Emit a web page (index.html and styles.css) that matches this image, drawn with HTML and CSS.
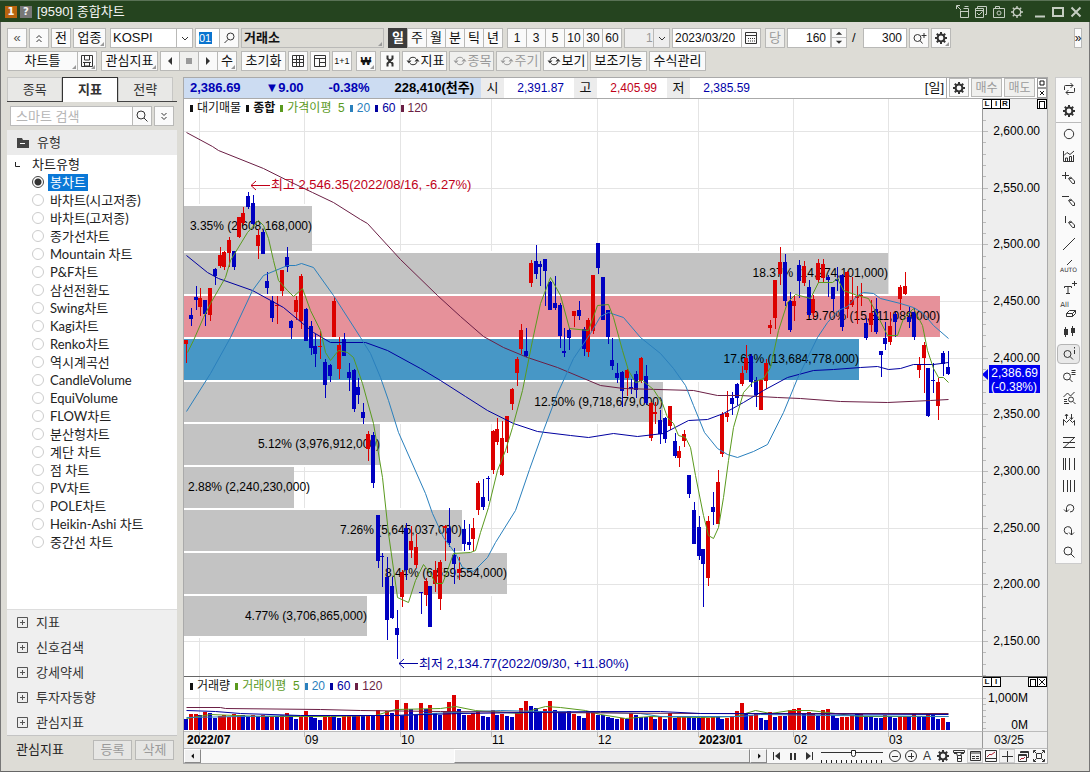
FILE: index.html
```html
<!DOCTYPE html>
<html lang="ko">
<head>
<meta charset="utf-8">
<title>[9590] 종합차트</title>
<link rel="stylesheet" href="styles.css">
</head>
<body>
<svg class="defs" aria-hidden="true">
  <symbol id="i-gear" viewBox="0 0 16 16"><circle cx="8" cy="8" r="3.400" fill="none" stroke="currentColor" stroke-width="2"/><path d="M8 2v3M8 11v3M2 8h3M11 8h3M3.800 3.800l2 2M10.200 10.200l2 2M12.200 3.800l-2 2M5.800 10.200l-2 2" stroke="currentColor" stroke-width="2"/></symbol>
  <symbol id="i-gearthin" viewBox="0 0 16 16"><circle cx="8" cy="8" r="3.700" fill="none" stroke="currentColor" stroke-width="1.400"/><path d="M8 2v3M8 11v3M2 8h3M11 8h3M3.800 3.800l2 2M10.200 10.200l2 2M12.200 3.800l-2 2M5.800 10.200l-2 2" stroke="currentColor" stroke-width="1.400"/></symbol>
  <symbol id="i-search" viewBox="0 0 16 16"><circle cx="7" cy="7" r="4"/><path d="M10 10l3.500 3.500"/></symbol>
  <symbol id="i-searchl" viewBox="0 0 16 16"><circle cx="9.500" cy="6.500" r="3.500"/><path d="M7 9.500L3.500 13"/></symbol>
  <symbol id="i-cycle" viewBox="0 0 16 16"><path d="M4 7a4 3.500 0 0 1 7-1.500M12 9a4 3.500 0 0 1-7 1.500"/><path d="M1.500 7.500h5L4 10.500zM9.500 8.500h5L12 5.500z" fill="currentColor" stroke="none"/></symbol>
</svg>
<div class="window">
  <header class="title">
    <span class="badge one">1</span><span class="badge help">?</span>
    <h1>[9590] 종합차트</h1>
    <div class="wintools">
      <button aria-label="내보내기"><svg viewBox="0 0 16 16"><path d="M1.500 5V1.500H5M2 2l4 4M5.500 6.500V13.500h8V4.500h-5M6 7.500h7M9.500 2.500h4"/></svg></button>
      <button aria-label="복사"><svg viewBox="0 0 16 16"><path d="M4.500 4V2.500h9v8H12M2.500 4.500h8v9h-8zM3 6.500h7M4 9l2 2 3.500-3.500"/></svg></button>
      <button aria-label="캡처"><svg viewBox="0 0 16 16"><path d="M2.500 4.500h11v9h-11zM4.500 4V2.500h4V4"/><circle cx="8" cy="9" r="2"/></svg></button>
      <button aria-label="설정"><svg><use href="#i-gearthin"/></svg></button>
      <button aria-label="최소화" class="gapl"><svg viewBox="0 0 16 16"><path d="M3 12.500h10" stroke-width="2"/></svg></button>
      <button aria-label="최대화"><svg viewBox="0 0 16 16"><path d="M3 4h10v8H3z" stroke-width="2"/></svg></button>
      <button aria-label="닫기"><svg viewBox="0 0 16 16"><path d="M3.500 3.500l9 9M12.500 3.500l-9 9" stroke-width="2"/></svg></button>
    </div>
  </header>

  <div class="bar">
    <button class="b w20 small">«</button>
    <button class="b w20 small" aria-label="위로"><svg viewBox="0 0 16 16"><path d="M5.500 8L8 5.500 10.500 8M5.500 12L8 9.500l2.500 2.500"/></svg></button>
    <button class="b w20">전</button>
    <button class="b w33 more">업종</button>
    <span class="grp ml1"><select class="sel kospi" aria-label="업종 선택"><option>KOSPI</option></select><svg class="arrow" viewBox="0 0 16 16"><path d="M5 7l3 3 3-3"/></svg></span>
    <span class="grp"><input class="code" value="01" aria-label="코드"><button class="b w20" aria-label="검색"><svg><use href="#i-searchl"/></svg></button></span>
    <output class="market more">거래소</output>
    <span class="grp ml1 joined"><button class="b on">일</button><button class="b">주</button><button class="b">월</button><button class="b">분</button><button class="b">틱</button><button class="b">년</button></span>
    <span class="grp ml1 joined num"><button class="b">1</button><button class="b">3</button><button class="b">5</button><button class="b">10</button><button class="b">30</button><button class="b">60</button></span>
    <span class="grp"><select class="sel unit" aria-label="단위" disabled><option>1</option></select><svg class="arrow" viewBox="0 0 16 16"><path d="M5 7l3 3 3-3"/></svg></span>
    <span class="grp"><input class="date" value="2023/03/20" aria-label="날짜"><button class="b w20" aria-label="달력"><svg viewBox="0 0 16 16"><path d="M2.500 2.500h11v11h-11zM3 5.500h10"/><path d="M5 8.500h7M5 11h7" stroke-dasharray="1 1"/></svg></button></span>
    <button class="b w20 off ml1">당</button>
    <span class="grp"><input class="n45" value="160" aria-label="표시 개수"><button class="b w16 spin" aria-label="개수 조절"><svg viewBox="0 0 16 20"><path d="M0 9.500h16" stroke="#b5b5b5"/><path d="M4.500 6.500h7L8 3zM4.500 13h7L8 16.500z" fill="currentColor" stroke="none"/></svg></button></span>
    <span class="slash">/</span>
    <input class="n45" value="300" aria-label="전체 개수">
    <button class="b w20" aria-label="확대"><svg viewBox="0 0 16 16"><circle cx="6.500" cy="8" r="3.500"/><path d="M9 10.500l2.500 3M10.500 5.500h5M13 3v5"/></svg></button>
    <button class="b w20 more" aria-label="설정"><svg><use href="#i-gear"/></svg></button>
    <button class="b expand">»</button>
  </div>

  <div class="bar second">
    <span class="grp joined"><button class="b w72 more">차트틀</button><button class="b more" aria-label="저장"><svg viewBox="0 0 16 16"><path d="M2.500 2.500h11v11h-11zM5.500 3v4h5V3M4 9.500h8M5.500 10v3h5v-3"/></svg></button></span>
    <button class="b w57 more ml1">관심지표</button>
    <span class="grp joined"><button class="b" aria-label="이전"><svg viewBox="0 0 16 16"><path d="M10 4v8L6 8z" fill="currentColor" stroke="none"/></svg></button><button class="b off" aria-label="정지"><svg viewBox="0 0 16 16"><path d="M5 5h6v6H5z" fill="currentColor" stroke="none"/></svg></button><button class="b" aria-label="다음"><svg viewBox="0 0 16 16"><path d="M6 4v8l4-4z" fill="currentColor" stroke="none"/></svg></button><button class="b more">수</button></span>
    <button class="b w46 ml1">초기화</button>
    <button class="b w20" aria-label="격자"><svg viewBox="0 0 16 16"><path d="M2.500 2.500h11v11h-11zM2.500 6.500h11M2.500 9.500h11M6.500 2.500v11M9.500 2.500v11"/></svg></button>
    <button class="b w20" aria-label="분할"><svg viewBox="0 0 16 16"><path d="M2.500 2.500h11v11h-11zM2.500 5.500h11M7.500 5.500v8M7.500 9.500h6"/></svg></button>
    <button class="b w20 tiny">1+1</button>
    <button class="b w20 more ml1 wonb">₩</button>
    <button class="b w20 ml1" aria-label="도구"><svg viewBox="0 0 16 16"><path d="M5.500 2.500v3l5 5v3M10.500 2.500v3l-5 5v3" stroke-width="2"/></svg></button>
    <button class="b w46"><svg><use href="#i-cycle"/></svg>지표</button>
    <button class="b w46 off"><svg><use href="#i-cycle"/></svg>종목</button>
    <button class="b w46 off"><svg><use href="#i-cycle"/></svg>주기</button>
    <button class="b w46"><svg><use href="#i-cycle"/></svg>보기</button>
    <button class="b w57">보조기능</button>
    <button class="b w57">수식관리</button>
  </div>

  <main class="work">
    <aside class="side">
      <nav class="tabs"><button>종목</button><button class="cur">지표</button><button>전략</button></nav>
      <div class="find"><input placeholder="스마트 검색" aria-label="스마트 검색"><button class="b" aria-label="검색"><svg><use href="#i-search"/></svg></button><button class="b fold" aria-label="펼치기"><svg viewBox="0 0 16 16"><path d="M5.500 5L8 7.500 10.500 5M5.500 9L8 11.500 10.500 9"/></svg></button></div>
      <h2 class="sec"><svg viewBox="0 0 12 12"><path d="M0 1h5l1 2h6v8H0z" fill="#444" stroke="none"/><path d="M3 6.500h5" stroke="#fff"/></svg>유형</h2>
      <fieldset class="tree">
        <legend><svg viewBox="0 0 8 8"><path d="M1.500 1v4.500H6"/></svg>차트유형</legend>
        <label><input type="radio" name="t" checked><span>봉차트</span></label>
        <label><input type="radio" name="t"><span>바차트(시고저종)</span></label>
        <label><input type="radio" name="t"><span>바차트(고저종)</span></label>
        <label><input type="radio" name="t"><span>종가선차트</span></label>
        <label><input type="radio" name="t"><span>Mountain 차트</span></label>
        <label><input type="radio" name="t"><span>P&amp;F차트</span></label>
        <label><input type="radio" name="t"><span>삼선전환도</span></label>
        <label><input type="radio" name="t"><span>Swing차트</span></label>
        <label><input type="radio" name="t"><span>Kagi차트</span></label>
        <label><input type="radio" name="t"><span>Renko차트</span></label>
        <label><input type="radio" name="t"><span>역시계곡선</span></label>
        <label><input type="radio" name="t"><span>CandleVolume</span></label>
        <label><input type="radio" name="t"><span>EquiVolume</span></label>
        <label><input type="radio" name="t"><span>FLOW차트</span></label>
        <label><input type="radio" name="t"><span>분산형차트</span></label>
        <label><input type="radio" name="t"><span>계단 차트</span></label>
        <label><input type="radio" name="t"><span>점 차트</span></label>
        <label><input type="radio" name="t"><span>PV차트</span></label>
        <label><input type="radio" name="t"><span>POLE차트</span></label>
        <label><input type="radio" name="t"><span>Heikin-Ashi 차트</span></label>
        <label><input type="radio" name="t"><span>중간선 차트</span></label>
      </fieldset>
      <div class="groups">
        <button><svg viewBox="0 0 12 12"><path d="M.5 .5h10v10H.5zM3 5.500h5M5.500 3v5"/></svg>지표</button>
        <button><svg viewBox="0 0 12 12"><path d="M.5 .5h10v10H.5zM3 5.500h5M5.500 3v5"/></svg>신호검색</button>
        <button><svg viewBox="0 0 12 12"><path d="M.5 .5h10v10H.5zM3 5.500h5M5.500 3v5"/></svg>강세약세</button>
        <button><svg viewBox="0 0 12 12"><path d="M.5 .5h10v10H.5zM3 5.500h5M5.500 3v5"/></svg>투자자동향</button>
        <button><svg viewBox="0 0 12 12"><path d="M.5 .5h10v10H.5zM3 5.500h5M5.500 3v5"/></svg>관심지표</button>
      </div>
      <div class="foot"><span>관심지표</span><button class="b off">등록</button><button class="b off">삭제</button></div>
    </aside>

    <section class="chart">
      <div class="quote">
        <div class="now"><b>2,386.69</b><b>▼9.00</b><b>-0.38%</b><b class="k">228,410(천주)</b></div>
        <span class="lab">시</span><span class="val down">2,391.87</span>
        <span class="lab">고</span><span class="val up">2,405.99</span>
        <span class="lab">저</span><span class="val down">2,385.59</span>
        <span class="period">[일]</span>
        <button class="b w20" aria-label="설정"><svg><use href="#i-gear"/></svg></button>
        <button class="b w31 off">매수</button><button class="b w31 off">매도</button>
        <span class="pair"><button aria-label="최대화"><svg viewBox="0 0 10 10"><path d="M3 3h4v4H3z"/></svg></button><button aria-label="닫기"><svg viewBox="0 0 10 10"><path d="M3 3l4 4M7 3L3 7"/></svg></button></span>
      </div>
      <div class="pane plot">
        <div class="legend"><span>대기매물</span><span class="bold">종합</span><span class="c5">가격이평&nbsp; 5</span><span class="c20">20</span><span class="c60">60</span><span class="c120">120</span></div>
        <svg id="price" role="img" aria-label="KOSPI 일봉"></svg>
      </div>
      <div class="pane axis">
        <div class="mini"><i>L</i><i>I</i><i>R</i></div><div class="mini right"><i class="sq"></i></div>
        <svg id="axis"></svg>
      </div>
      <div class="pane vol">
        <div class="legend"><span>거래량</span><span class="c5">거래이평&nbsp; 5</span><span class="c20">20</span><span class="c60">60</span><span class="c120">120</span></div>
        <svg id="volume" role="img" aria-label="거래량"></svg>
      </div>
      <div class="pane vaxis">
        <div class="mini"><i>L</i><i>I</i></div><div class="mini right"><i class="sq"></i><i class="x"><svg viewBox="0 0 8 8"><path d="M1 1l6 6M7 1L1 7"/></svg></i></div>
        <svg id="vaxis"></svg>
      </div>
      <div class="pane dates"><svg id="dates"></svg></div>
      <div class="pane lastdate">03/25</div>
      <div class="bottom">
        <button class="sb" aria-label="왼쪽"><svg viewBox="0 0 16 16"><path d="M9 5v6L6 8z" fill="#000" stroke="none"/></svg></button>
        <div class="track"><div class="thumb"></div></div>
        <button class="sb" aria-label="오른쪽"><svg viewBox="0 0 16 16"><path d="M7 5v6l3-3z" fill="#000" stroke="none"/></svg></button>
        <div class="play">
          <button aria-label="처음"><svg viewBox="0 0 16 16"><path d="M4.500 4v8" /><path d="M11 4v8L6 8z" fill="currentColor" stroke="none"/></svg></button>
          <button aria-label="일시정지"><svg viewBox="0 0 16 16"><path d="M6 5v7M10 5v7" stroke-width="2"/></svg></button>
          <button aria-label="끝"><svg viewBox="0 0 16 16"><path d="M11.500 4v8"/><path d="M5 4v8l5-4z" fill="currentColor" stroke="none"/></svg></button>
        </div>
        <div class="slide"><input type="range" min="0" max="100" value="53" aria-label="확대 비율"></div>
        <div class="acts">
          <button aria-label="축소"><svg viewBox="0 0 16 16"><circle cx="8" cy="8" r="5.500"/><path d="M5 8.500h6"/></svg></button>
          <button aria-label="확대"><svg viewBox="0 0 16 16"><circle cx="8" cy="8" r="5.500"/><path d="M5 8.500h6M8.500 5v6"/></svg></button>
          <button>A</button>
          <button aria-label="설정"><svg><use href="#i-gear"/></svg></button>
          <button aria-label="도구"><svg viewBox="0 0 16 16"><path d="M2.500 2.500h11v2h-11zM3 5.500h3v2M13 5.500h-3v2M6.500 7.500h4v6h-4zM7 10.500h3"/></svg></button>
          <button aria-label="표" class="box"><svg viewBox="0 0 16 16"><path d="M3.500 3.500h10v9h-10zM3.500 5h10M5 8.500h3M5 10.500h3M9 8.500h3M9 10.500h3"/></svg></button>
          <button aria-label="차트"><svg viewBox="0 0 16 16"><path d="M2.500 2.500h11v11h-11zM3 10.500h10"/><path d="M4 9l3-3 1 1 4-3" stroke="#b02030"/></svg></button>
          <button aria-label="십자선" class="box"><svg viewBox="0 0 16 16"><path d="M3 8.500h11M8.500 3v11"/></svg></button>
          <button aria-label="창"><svg viewBox="0 0 16 16"><path d="M5.500 5V3.500h8v6H12M3.500 6.500h8v7h-8zM3.500 7.500h8M5 4.500h8"/><path d="M5 12l2-2 1 1 2-2" stroke="#b02030"/></svg></button>
          <button aria-label="전체화면"><svg viewBox="0 0 16 16"><path d="M2.500 5V2.500H5M11 2.500h2.500V5M13.500 11v2.500H11M5 13.500H2.500V11M5.500 5.500h5v5h-5zM3 3l2 2M13 3l-2 2M13 13l-2-2M3 13l2-2"/></svg></button>
        </div>
      </div>
    </section>

    <nav class="tools" aria-label="도구">
      <button aria-label="새로고침"><svg viewBox="0 0 16 16"><path d="M3.500 9V5.500q0-1 1-1H12M9.500 2L12 4.500 9.500 7M13.500 7v3.500q0 1-1 1H5M7.500 9L5 11.500 7.500 14"/></svg></button>
      <button aria-label="설정"><svg><use href="#i-gear"/></svg></button>
      <hr>
      <button aria-label="원"><svg viewBox="0 0 16 16"><circle cx="8" cy="8" r="4.700"/></svg></button>
      <button aria-label="지표"><svg viewBox="0 0 16 16"><path d="M2.500 3v10.500H13M4.500 13v-3h2v3M8.500 13V8.500h2V13M12.500 13V7M3 7.500l3-3 3 2L13 3"/></svg></button>
      <button aria-label="십자 그리기"><svg viewBox="0 0 16 16"><path d="M1 5.500h7M4.500 2v7M7.500 8.500l2-1.500 4 4v2.500h-2zM8 9l3-1"/></svg></button>
      <button aria-label="수평선"><svg viewBox="0 0 16 16"><path d="M1 4.500h7M7.500 8.500l2-1.500 4 4v2.500h-2zM8 9l3-1"/></svg></button>
      <button aria-label="수직선"><svg viewBox="0 0 16 16"><path d="M4.500 2v7M7.500 8.500l2-1.500 4 4v2.500h-2zM8 9l3-1"/></svg></button>
      <button aria-label="추세선"><svg viewBox="0 0 16 16"><path d="M2 14L14 2"/></svg></button>
      <button class="auto"><svg viewBox="0 0 16 7"><path d="M6 6l5-5"/></svg><small>AUTO</small></button>
      <button aria-label="글자"><svg viewBox="0 0 16 16"><path d="M3.500 8V6.500h7V8M7 6.500v7M5 13.500h4M11 3.500h5M13.500 1v5"/></svg></button>
      <button class="auto all"><small>All</small><svg viewBox="0 0 16 9"><path d="M5.500 4.500l3-3h6l-3 3zM5.500 4.500v3h6v-3M11.500 7.500l3-3v-3"/></svg></button>
      <button aria-label="봉"><svg viewBox="0 0 16 16"><path d="M4.500 3v10M11.500 2v10"/><path d="M3 5h4v6H3zM10 4h4v5h-4z" fill="currentColor" stroke="none"/></svg></button>
      <button aria-label="정보" class="sel2"><svg viewBox="0 0 16 16"><circle cx="6.500" cy="8" r="3.500"/><path d="M9 10.500l3 3M13.500 1v1.500M13.500 4v4"/></svg></button>
      <button aria-label="목록 검색"><svg viewBox="0 0 16 16"><circle cx="6" cy="8.500" r="3.500"/><path d="M8.500 11l3 3M10.500 2.500h4M10.500 4.500h4M10.500 6.500h4"/></svg></button>
      <button aria-label="패턴 검색"><svg viewBox="0 0 16 16"><path d="M2.500 7l4-4 3 3 4-4M3 9.500h3M3 11.500h3M3 13.500h5M12 11.500l2.500 2.500"/><circle cx="10" cy="9.500" r="2.500"/></svg></button>
      <button aria-label="매매"><svg viewBox="0 0 16 16"><path d="M2.500 13.500V7.500l3 3 3-3 3 3 2-2v5M5.500 2v5M4 4l1.500-2L7 4M10.500 2v5M9 5.500l1.500 2 1.500-2"/></svg></button>
      <button aria-label="구간"><svg viewBox="0 0 16 16"><path d="M2 3.500h12M2 8.500h12M2 13.500h12M13.500 3.500L3 13.500"/></svg></button>
      <button aria-label="간격"><svg viewBox="0 0 16 16"><path d="M2.500 2v12M4.500 2v12M8.500 2v12M13.500 2v12"/></svg></button>
      <button aria-label="등간격"><svg viewBox="0 0 16 16"><path d="M2.500 2v12M6.500 2v12M9.500 2v12M13.500 2v12"/></svg></button>
      <button aria-label="되돌리기"><svg viewBox="0 0 16 16"><path d="M5.500 12V7.500a3.700 3.700 0 1 1 3.500 4.500M3 9.500L5.500 12 8 9.500"/></svg></button>
      <button aria-label="다시하기"><svg viewBox="0 0 16 16"><path d="M7 12a3.700 3.700 0 1 1 3.500-4.500V13M8 10.500l2.500 2.500 2.500-2.500"/></svg></button>
      <button aria-label="찾기"><svg><use href="#i-search"/></svg></button>
    </nav>
  </main>
</div>
<script src="chart.js"></script>
</body>
</html>
```
FILE: styles.css
```css
* { box-sizing: border-box; }
body { margin: 0; background: #dddcd6; color: #111; font: 13px/16px "Liberation Sans", "Noto Sans CJK KR", sans-serif; }
button, input, select, output { font: inherit; color: inherit; margin: 0; padding: 0; border-radius: 0; }
button { background: none; border: 0; display: flex; align-items: center; justify-content: center; white-space: nowrap; }
svg { fill: none; stroke: currentColor; flex: none; }
.defs { position: absolute; width: 0; height: 0; }
.window { min-height: 100vh; display: flex; flex-direction: column; border-left: 1px solid #777; border-right: 1px solid #777; border-bottom: 1px solid #666; }

.title { height: 22px; margin: 0 -1px; background: #25441f; border-top: 1px solid #5a7256; display: flex; align-items: center; gap: 3px; padding: 0 6px 0 5px; color: #f4f4f4; }
.title h1 { font-size: 13px; font-weight: 400; margin: 0 0 0 2px; }
.badge { width: 12px; height: 12px; font: bold 10px/12px "DejaVu Sans", sans-serif; text-align: center; }
.one { background: #b8640f; }
.help { background: #777; }
.wintools { margin-left: auto; display: flex; gap: 2px; color: #c5cdc2; }
.wintools svg { width: 16px; height: 16px; }
.wintools .gapl { margin-left: 5px; }

.bar { display: flex; gap: 2px; height: 20px; margin: 6px 7px 0 6px; }
.second { margin-top: 3px; }
.b { height: 20px; background: #fafafa; border: 1px solid #b9b9b7; position: relative; }
.b svg { width: 16px; height: 16px; color: #333; }
.w16 { width: 16px; } .w20 { width: 20px; } .w31 { width: 31px; } .w33 { width: 33px; }
.w46 { width: 45px; } .w57 { width: 57px; } .w72 { width: 71px; }
.ml1 { margin-left: 2px; }
.grp { display: flex; position: relative; }
.joined .b { min-width: 20px; margin-right: -1px; }
.joined { padding-right: 1px; }
.num { font-size: 12px; }
.b.on { background: #3c3c3c; color: #fff; border-color: #3c3c3c; font-weight: 700; }
.b.off, .b.off svg { color: #9a9a9a; }
.b.off { background: #f0f0ee; }
.small { font-size: 13px; color: #555; }
.tiny { font-size: 9px; }
.wonb { font-weight: 700; font-size: 11px; }
.more::after { content: ""; position: absolute; right: 1px; bottom: 1px; border: 2px solid #999; border-top-color: transparent; border-left-color: transparent; }
.bar input, .bar select { height: 20px; border: 1px solid #b9b9b7; background: #fff; font-size: 13px; }
.sel { appearance: none; opacity: 1; }
.bar .kospi { width: 83px; padding-left: 2px; font-size: 13px; }
.bar .unit { width: 46px; padding-left: 21px; background: #eee; color: #999; font-size: 12px; }
.arrow { position: absolute; right: 0; top: 0; width: 17px; height: 20px; border-left: 1px solid #b9b9b7; pointer-events: none; color: #333; }
.bar .code { width: 24px; padding-left: 3px; border-right: 0; color: #fff; background: linear-gradient(#0a74cf, #0a74cf) 3px 3px / 13px 12px no-repeat #fff; font-size: 11px; }
.market { width: 143px; border: 1px solid #b9b9b7; position: relative; font-weight: 700; padding-left: 2px; line-height: 17px; }
.bar .date { width: 69px; padding-left: 2px; font-size: 12px; border-right: 0; }
.bar .n45 { width: 44px; text-align: right; padding-right: 4px; font-size: 12px; }
.spin svg { width: 16px; height: 18px; }
.slash { width: 9px; margin-left: 3px; line-height: 20px; }
.expand { width: 8px; margin-left: auto; font-size: 12px; }

.work { flex: 1; display: flex; margin: 6px 7px 7px 6px; }
.side { width: 170px; margin-right: 6px; display: flex; flex-direction: column; color: #222; }
.tabs { display: flex; border-bottom: 1px solid #444; height: 25px; padding-right: 4px; }
.tabs button { flex: 1; height: 24px; border: 1px solid #c6c6c4; border-bottom: 0; background: #e8e8e6; color: #333; }
.tabs .cur { background: #fff; border-color: #333; height: 25px; font-weight: 700; }
.find { display: flex; padding: 4px 3px; }
.find input { flex: 1; min-width: 0; height: 20px; border: 1px solid #bbb; padding-left: 5px; background: #fff; }
.find input::placeholder { color: #b5b5b5; }
.find .b { width: 20px; margin-left: -1px; }
.find .fold { margin-left: 2px; }
.sec { margin: 0; font-size: 13px; font-weight: 400; height: 25px; background: #ebebeb; display: flex; align-items: center; gap: 8px; padding-left: 10px; color: #333; }
.sec svg { width: 12px; height: 12px; }
.tree { flex: 1; margin: 0; border: 0; padding: 0 0 0 25px; min-width: 0; background: #fff; font-family: Lato, "Noto Sans CJK KR", sans-serif; }
.tree legend { float: left; width: 100%; padding: 0; height: 18px; line-height: 18px; margin-left: -18px; }
.tree legend svg { width: 8px; height: 8px; margin-right: 10px; }
.tree label { clear: both; display: flex; align-items: center; height: 18px; gap: 4px; }
.tree span { padding: 0 2px; line-height: 17px; }
.tree input { appearance: none; width: 12px; height: 12px; border: 1px solid #ccc; border-radius: 50%; background: #fff; }
.tree input:checked { border-color: #444; background: radial-gradient(#333 0 3px, #fff 4px); }
.tree input:checked + span { background: #0a78d7; color: #fff; }
.groups { background: #efefef; border-top: 1px solid #ddd; }
.groups button { width: 100%; height: 25px; justify-content: flex-start; gap: 7px; padding-left: 10px; color: #333; }
.groups svg { width: 12px; height: 12px; color: #555; }
.foot { height: 29px; background: #dddcd6; border-top: 1px solid #c4c4c4; display: flex; align-items: center; gap: 3px; padding: 0 3px 0 9px; }
.foot span { flex: 1; }
.foot .b { width: 39px; background: #e6e6e4; }

.chart { flex: 1; min-width: 0; border: 1px solid #aaa; background: #fff; display: grid; grid-template-columns: minmax(0, 1fr) 65px; grid-template-rows: 21px minmax(0, 1fr) 55px 17px 15px; }
.quote { grid-column: 1 / -1; display: flex; align-items: stretch; border-bottom: 1px solid #aaa; line-height: 20px; font-size: 12px; }
.now { width: 297px; background: #ccdcf2; color: #0000b4; display: flex; justify-content: space-between; padding: 0 7px 0 6px; font-size: 13px; }
.now .k { color: #000; }
.lab { width: 23px; background: #ececec; text-align: center; font-size: 13px; }
.val { width: 70px; text-align: right; padding-right: 10px; }
.down { color: #0000a8; } .up { color: #c00018; }
.period { margin-left: auto; padding-right: 2px; font-size: 13px; border-right: 1px solid #aaa; }
.quote .b { margin-left: 2px; height: 19px; }
.pair { margin-left: 2px; width: 10px; display: flex; flex-direction: column; }
.pair button { width: 10px; height: 10px; border: 1px solid #999; }
.pair svg { width: 10px; height: 10px; }
.pane { position: relative; min-width: 0; min-height: 0; overflow: hidden; }
.pane > svg { display: block; position: absolute; width: 100%; height: 100%; stroke: none; }
.pane text { fill: #000; font-size: 12px; stroke: none; }
.pane .note { font-size: 13px; }
.pane .hi { fill: #c00018; }
.pane .lo { fill: #0000a0; }
.pane .tag { fill: #fff; }
.legend { position: absolute; z-index: 1; top: 1px; left: 6px; display: flex; gap: 5px; }
.legend span { display: flex; align-items: center; font-size: 12px; }
.legend span::before { content: ""; width: 3px; height: 7px; background: currentColor; margin-right: 4px; }
.bold { font-weight: 700; }
.c5 { color: #5a9a1e; } .c20 { color: #2a80bd; } .c60 { color: #0000a0; } .c120 { color: #6b1f45; }
.axis, .vaxis { background: #eee; border-left: 1px solid #999; }
.vol, .vaxis { border-top: 1px solid #666; }
.mini { position: absolute; z-index: 1; top: 0; left: -1px; display: flex; }
.mini.right { left: auto; right: 0; }
.mini i { width: 10px; height: 10px; margin-right: -1px; border: 1px solid #000; background: #fff; font: bold 8px/8px "Liberation Sans", sans-serif; text-align: center; }
.mini.right i:last-child { margin-right: 0; }
.mini .sq { padding: 1px; }
.mini .sq::before { content: ""; display: block; height: 6px; border: 1px solid #000; }
.mini .x svg { display: block; width: 8px; height: 8px; }
.dates, .lastdate { background: #eee; border-top: 1px solid #bbb; }
.lastdate { text-align: center; border-left: 1px solid #999; font-size: 12px; padding-right: 12px; }
.bottom { grid-column: 1 / -1; display: flex; background: #f8f8f8; border-top: 1px solid #bbb; }
.sb { width: 17px; background: #f0f0f0; border: 1px solid #888; border-top-color: #fff; border-left-color: #fff; }
.sb svg { width: 16px; height: 14px; }
.track { flex: 1; display: flex; justify-content: flex-end; background: #f8f8f8; }
.thumb { width: 54%; background: #ededed; border: 1px solid #888; border-top-color: #fff; border-left-color: #fff; }
.play { display: flex; width: 54px; padding-left: 2px; color: #333; }
.play svg, .acts svg { width: 16px; height: 16px; }
.play button { width: 16px; }
.slide { width: 62px; background: repeating-linear-gradient(90deg, #222 0 1px, transparent 1px 5px) 0 100% / 100% 3px no-repeat; }
.slide input { appearance: none; display: block; width: 62px; height: 8px; background: linear-gradient(#333, #333) 0 3px / 100% 1px no-repeat; }
.slide input::-webkit-slider-thumb { appearance: none; width: 5px; height: 7px; border: 1px solid #222; background: #fff; border-radius: 0 0 3px 3px; }
.acts { display: flex; color: #333; padding: 0 0 0 4px; }
.acts button { width: 16px; font-size: 12px; }
.acts .box { border: 1px solid #ccc; background: #f2f2f2; }

.tools { width: 27px; margin-left: 7px; align-self: flex-start; background: #fafafa; border: 1px solid #ccc; color: #333; }
.tools button { width: 25px; height: 22px; }
.tools svg { width: 16px; height: 16px; }
.tools hr { margin: 0; border: 0; border-top: 1px solid #bbb; }
.tools .sel2 { background: #e9e9e9; border: 1px solid #b5b5b5; border-radius: 4px; width: 23px; height: 20px; margin: 1px; }
.tools .auto { flex-direction: column; }
.tools .auto svg { width: 16px; height: 7px; }
.tools small { font: 6px/7px "DejaVu Sans", sans-serif; }
.tools .all small { margin-right: 8px; font-size: 7px; }
.tools .all svg { height: 9px; }
```
FILE: chart.js
```js
// Each candle: colour, high, body top, body bottom, low.
const candles = `R340,340,344,363 B308,315,319,326 B286,297,300,310 R288,298,307,316 B300,300,314,326 R288,288,315,321 B268,269,276,285 R247,255,266,268 R251,252,267,270 R237,240,253,267
B251,251,267,270 R217,217,237,238 R207,213,223,225 B192,196,207,209 B195,203,224,225 R229,235,246,259 B230,232,254,254 B272,281,288,294 B296,301,318,322 R296,305,306,324
R270,270,291,296 B247,257,267,272 B320,321,328,339 R296,300,312,320 R274,276,321,329 B308,309,341,341 B321,326,348,355 B334,346,354,367 R331,346,347,359 B359,362,385,398
B364,365,376,382 R297,301,337,337 R337,345,369,379 B333,339,356,356 B363,372,378,391 B369,370,409,412 B378,387,395,404 B403,412,418,424 R431,434,449,461 B432,435,483,488
B515,515,561,568 B553,556,557,587 B557,577,620,640 B577,586,618,619 B610,628,635,659 R570,572,597,607 B523,528,570,580 R526,541,550,558 R534,547,565,568 B592,592,593,614
R578,581,595,606 B586,586,627,627 R561,570,584,592 R560,562,599,610 R525,526,528,561 B508,528,543,547 B548,555,564,584 R557,569,573,580 B520,529,544,551 B524,542,545,550
R518,528,539,551 R481,483,510,515 B479,497,507,510 B476,478,479,501 R430,431,470,474 R418,429,442,445 R421,438,475,476 R416,416,442,453 R388,389,404,410 R357,359,373,386
R324,330,349,354 B328,351,356,357 R260,263,283,287 B245,261,274,279 B261,264,267,286 B259,259,271,306 B281,282,310,310 B276,303,308,310 B303,305,336,348 B328,351,353,357
B328,330,338,350 R311,311,316,327 B301,310,316,320 B327,329,349,356 R318,320,352,357 R275,275,331,334 B243,243,268,274 B277,277,320,320 B310,310,337,344 B338,360,366,370
B363,373,378,383 B371,372,391,407 R369,370,378,396 B379,387,389,394 B371,374,390,398 R357,358,381,383 B365,376,403,405 R402,403,438,441 R402,412,414,424 B410,420,434,444
B417,418,439,443 R406,406,426,430 B433,441,456,458 R446,451,458,467 R430,434,441,447 B475,475,494,498 B502,510,544,544 B516,527,556,560 B549,549,564,607 R516,521,578,586
B492,507,512,525 R470,482,524,524 R412,414,454,457 R391,413,417,422 B392,398,404,415 B383,384,398,405 R366,373,384,386 R345,358,370,373 B354,356,382,387 B377,380,395,407
R380,380,410,410 R359,363,381,389 R320,325,328,334 R280,280,318,329 R247,262,274,285 B254,262,301,306 B292,301,330,332 R296,301,306,321 B260,265,281,298 R261,266,283,286
B280,287,315,317 R295,299,313,318 R259,263,280,283 R259,264,278,283 B275,277,280,297 B287,287,299,311 B267,279,281,291 B274,275,327,331 R271,272,309,318 R277,300,305,307
R286,296,298,324 R283,295,296,306 B318,323,338,340 R300,313,325,332 B298,309,332,334 B351,351,355,377 B322,338,344,350 R312,326,342,345 B312,314,322,337 R285,287,299,310
R272,286,294,295 B307,317,322,328 B308,312,337,340 R357,364,370,378 R342,345,358,393 B368,368,416,417 B363,380,381,393 R378,382,406,420 B351,353,364,376 B351,367,374,375`
  .split(/\s+/).map(s => [s[0], ...s.slice(1).split(',').map(Number)]);

const volumes = `B11 R16 R16 B15 R18 B17 B12 R14 R15 R13 R16 R15 B15 B13 R15 B13 R15 B14 R14 B13 R15 R17 B15 B11 R14 R19 B13 B12 B10 R14
R13 B15 B12 R15 R14 B14 R15 B14 R15 B15 R20 B15 R19 B17 R30 B15 R27 B21 B15 R27 B21 R25 B17 B15 R19 R28 R35 B21 B15 R15
R17 R19 B14 B13 R20 B15 R16 B14 B13 R17 R22 R29 B24 B22 B19 R21 R29 B20 B18 B18 B19 R16 B14 B12 R19 R19 B15 B15 B13 B12
B11 R12 B11 R17 B15 B13 B13 R14 B11 R14 B11 R17 B12 R13 R14 B14 B12 B12 R14 R12 R13 B13 B11 R12 R14 R19 R27 B16 R15 R16
B12 B10 R18 B13 R14 B14 R20 R21 R22 B16 R18 R16 B14 R20 R21 B15 B12 R13 R13 R15 B16 R16 B14 B13 B12 B12 R15 B13 B12 R14
R13 B14 R16 B14 B13 R17 B15 B11 R12 B8`.split(/\s+/).map(s => [s[0], +s.slice(1)]);

const profile = [
  [206, 45, 312, '3.35% (2,608,168,000)'], [253, 41, 888, '18.37% (14,274,101,000)'],
  [296, 41, 940, '19.70% (15,311,089,000)', '#e6919a'], [339, 41, 859, '17.61% (13,684,778,000)', '#4797c6'],
  [382, 40, 663, '12.50% (9,718,679,000)'], [424, 41, 380, '5.12% (3,976,912,000)'],
  [467, 41, 294, '2.88% (2,240,230,000)'], [510, 41, 462, '7.26% (5,645,037,000)'],
  [553, 41, 507, '8.44% (6,559,554,000)'], [596, 40, 367, '4.77% (3,706,865,000)']
];

const averages = {
  '#6b1f45': '186,132 212,146 218,150 263,168 287,180 312,192 333,202 360,219 367,223 400,259 437,295 460,316 483,336 503,347 527,357 557,367 600,385 623,388 693,390 717,395 740,395 777,397 800,398 840,401 887,402 930,400 948,399',
  '#0000a0': '186,255 207,272 218,278 252,290 283,307 313,332 330,342 365,342 387,350 420,368 440,380 465,396 487,410 513,423 537,431 570,435 588,437 613,433 637,436 663,433 688,420 707,419 723,413 743,402 763,390 787,377 813,370 833,369 860,367 877,366 888,369 900,368 913,364 933,364 948,362',
  '#2a80bd': '186,411 210,373 230,337 252,290 263,275 287,265 295,265 301,263 313,267 333,295 360,337 370,353 380,377 388,400 398,432 425,493 432,513 443,537 455,553 462,567 473,571 487,557 495,542 515,510 529,469 543,430 557,393 573,358 590,333 600,316 608,312 623,317 640,337 660,353 673,368 685,385 693,405 704,432 717,448 727,454 737,457 753,451 767,444 783,412 797,378 817,337 827,322 838,310 847,306 857,295 863,292 873,293 880,298 900,303 913,307 923,313 933,325 948,338',
  '#5a9a1e': '187,352 193,340 203,317 210,303 225,277 230,260 247,232 258,220 263,225 268,238 273,260 278,280 287,290 293,296 302,288 310,310 320,330 325,352 330,360 338,350 347,352 353,357 362,383 373,423 382,477 388,533 397,597 408,602 415,580 423,564 430,573 435,583 442,583 447,570 453,553 470,552 475,550 480,532 488,507 497,470 505,450 512,427 522,390 532,340 540,303 550,277 560,295 569,328 588,330 597,305 608,304 613,317 622,350 628,370 635,382 642,380 653,389 662,403 667,417 673,423 678,435 685,437 690,447 695,475 703,515 708,535 713,538 718,527 723,497 728,460 733,427 743,392 752,382 763,378 770,367 778,330 787,302 795,294 810,298 818,282 832,282 837,278 843,290 857,295 868,298 873,307 878,317 887,335 897,335 903,318 913,308 922,325 927,350 933,368 938,377 943,377 948,382'
};

const volumeAverages = {
  '#5a9a1e': '186,719 210,715 260,717 330,717 375,716 395,710 440,709 455,707 475,711 490,712 520,714 545,707 560,708 585,711 600,715 625,719 650,717 700,718 735,717 755,711 770,714 790,711 810,711 835,714 860,717 948,717',
  '#2a80bd': '186,718 240,717 300,716 400,716 430,714 500,711 540,712 600,713 640,714 660,717 740,717 760,715 830,716 948,717',
  '#6b1f45': '186,708 220,708 225,709 320,710 360,711 440,712 540,713 700,714 948,714',
  '#0000a0': '186,711 215,712 240,714 300,716 390,716 460,714 600,712 660,712 700,714 948,715'
};

const RED = '#dc0000', BLUE = '#0000c0', LEFT = 184;
const months = [[199, '2022/07'], [304, '09'], [400, '10'], [491, '11'], [597, '12'], [698, '2023/01'], [793, '02'], [888, '03']];
const levels = Array.from({ length: 10 }, (_, i) => Math.round(131 + i * 56.67));
const cx = i => Math.round(186 + i * 4.79);
const rect = (x, y, w, h, fill) => `<rect x="${x}" y="${y}" width="${w}" height="${h}" fill="${fill}"/>`;
const text = (x, y, s, extra = '') => `<text x="${x}" y="${y}" ${extra}>${s}</text>`;
const lines = set => Object.entries(set).map(([c, p]) =>
  `<polyline points="${p}" fill="none" stroke="${c}" transform="translate(.5 .5)"/>`).join('');
const put = (id, x, y, body) => {
  document.getElementById(id).innerHTML = `<g transform="translate(${-x} ${-y})">${body}</g>`;
};

const columns = months.map(([x]) => rect(x, 98, 1, 640, '#e4e4e4')).join('');

put('price', LEFT, 99,
  columns + levels.map(y => rect(LEFT, y, 3000, 1, '#e4e4e4')).join('') +
  profile.map(([y, h, end, , fill]) => rect(LEFT, y - 2, end - LEFT, h + 4, '#fff') + rect(LEFT, y, end - LEFT, h, fill || '#c3c3c3')).join('') +
  profile.map(([y, , end, s]) => end === 294 ? text(188, y + 24, s) : text(end, y + 24, s, 'text-anchor="end"')).join('') +
  candles.map(([c, hi, top, bot, lo], i) => {
    const fill = c === 'R' ? RED : BLUE;
    return rect(cx(i), hi, 1, Math.max(1, lo - hi), fill) + rect(cx(i) - 2, top, 4, Math.max(1, bot - top), fill);
  }).join('') + lines(averages) +
  '<path d="M251 185.500h19M256 181l-5 4.500 5 4.500" fill="none" stroke="#c00018"/>' +
  text(271, 189, '최고 2,546.35(2022/08/16, -6.27%)', 'class="note hi"') +
  '<path d="M399 663.500h19M404 659l-5 4.500 5 4.500" fill="none" stroke="#0000a0"/>' +
  text(419, 668, '최저 2,134.77(2022/09/30, +11.80%)', 'class="note lo"'));

const ticks = Array.from({ length: 50 }, (_, i) => rect(984, Math.round(119.7 + i * 11.33), i % 5 === 1 ? 5 : 3, 1, '#bbb')).join('');
put('axis', 984, 99, ticks +
  levels.map((y, i) => text(1041, y + 4, (2600 - i * 50).toLocaleString('en-US') + '.00', 'text-anchor="end"')).join('') +
  '<path d="M989 369v11l-6-5.500z" fill="#0000f0"/>' + rect(990, 365, 51, 28, '#0000f0') +
  text(1039, 377, '2,386.69', 'text-anchor="end" class="tag"') +
  text(1015, 391, '(-0.38%)', 'text-anchor="middle" class="tag"'));

put('volume', LEFT, 678, columns + rect(LEFT, 699, 3000, 1, '#e4e4e4') +
  volumes.map(([c, h], i) => rect(cx(i) - 2, 731 - h, 4, h, c === 'R' ? RED : BLUE)).join('') + lines(volumeAverages));

put('vaxis', 984, 678, [699, 705, 711, 717, 723, 729].map(y => rect(984, y, 3, 1, '#bbb')).join('') +
  text(1029, 703, '1,000M', 'text-anchor="end"') + text(1029, 730, '0M', 'text-anchor="end"'));

put('dates', LEFT, 733, months.map(([x, s], i) => rect(x, 733, 1, 5, '#bbb') +
  text(i ? x + 1 : 187, 745, s, s.length > 2 ? 'font-weight="700"' : '')).join(''));
```
